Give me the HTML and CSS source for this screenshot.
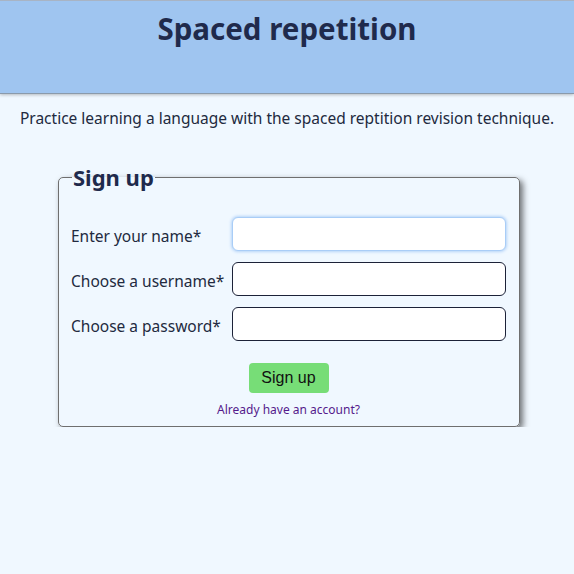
FILE: index.html
```html
<!DOCTYPE html>
<html lang="en">
<head>
<meta charset="utf-8">
<title>Spaced repetition</title>
<link rel="stylesheet" href="styles.css">
</head>
<body>
<header class="site-header">
  <h1 class="site-title">Spaced repetition</h1>
</header>
<main class="content">
  <p class="intro">Practice learning a language with the spaced reptition revision technique.</p>
  <form class="signup">
    <fieldset class="signup-box">
      <legend class="signup-legend">Sign up</legend>
      <div class="fields">
        <label class="field-label" for="name">Enter your name*</label>
        <input class="field-input focused" id="name" type="text">
        <label class="field-label" for="username">Choose a username*</label>
        <input class="field-input" id="username" type="text">
        <label class="field-label" for="password">Choose a password*</label>
        <input class="field-input" id="password" type="password">
      </div>
      <div class="actions">
        <button class="submit" type="button">Sign up</button>
        <a class="login-link" href="#">Already have an account?</a>
      </div>
    </fieldset>
  </form>
</main>
</body>
</html>
```
FILE: styles.css
```css
html, body {
  margin: 0;
  padding: 0;
}
body {
  background: #f0f8ff;
  font-family: "Noto Sans", "Open Sans", sans-serif;
  color: #222a40;
}
.site-header {
  height: 94px;
  background: #9fc5f0;
  border-top: 1px solid #a8b4c4;
  border-bottom: 1px solid #8a9aab;
  box-shadow: 0 1px 3px rgba(0,0,0,0.25);
  box-sizing: border-box;
}
.site-title {
  margin: 0;
  padding-top: 7px;
  text-align: center;
  font-size: 29.5px;
  font-weight: 700;
  color: #1f2a4c;
  line-height: 42px;
}
.content {
  padding-top: 13px;
}
.intro {
  margin: 0;
  text-align: center;
  font-size: 15.5px;
  line-height: 22px;
}
.signup {
  margin-top: 34px;
  display: flex;
  justify-content: center;
}
.signup-box {
  width: 462px;
  box-sizing: border-box;
  margin: 0 0 0 4px;
  padding: 26px 13px 8px 12px;
  border: 1px solid #6f6f6f;
  border-radius: 5px;
  box-shadow: 3px 3px 6px rgba(0,0,0,0.55);
}
.signup-legend {
  font-size: 22px;
  font-weight: 700;
  color: #1f2a4c;
  padding: 0 1px;
  margin-left: 1px;
  line-height: 28px;
}
.fields {
  display: grid;
  grid-template-columns: 161px 1fr;
  row-gap: 11px;
  align-items: center;
}
.field-label {
  font-size: 15.5px;
  color: #222a40;
  padding-top: 4px;
}
.field-input {
  height: 34px;
  box-sizing: border-box;
  border: 1px solid #1c2238;
  border-radius: 6px;
  background: #ffffff;
  font-size: 15px;
  outline: none;
}
.field-input.focused {
  border: 1px solid #a9cdf7;
  box-shadow: 0 0 3px 1px #b5d4f8;
}
.actions {
  display: flex;
  flex-direction: column;
  align-items: center;
  padding-top: 22px;
}
.submit {
  width: 80px;
  height: 30px;
  border: none;
  border-radius: 4px;
  background: #77dd77;
  font-family: "Liberation Sans", Arial, sans-serif;
  font-size: 16px;
  color: #111;
  padding: 0;
}
.login-link {
  margin-top: 9px;
  font-size: 12px;
  color: #551a8b;
  text-decoration: none;
  line-height: 16px;
}
```
